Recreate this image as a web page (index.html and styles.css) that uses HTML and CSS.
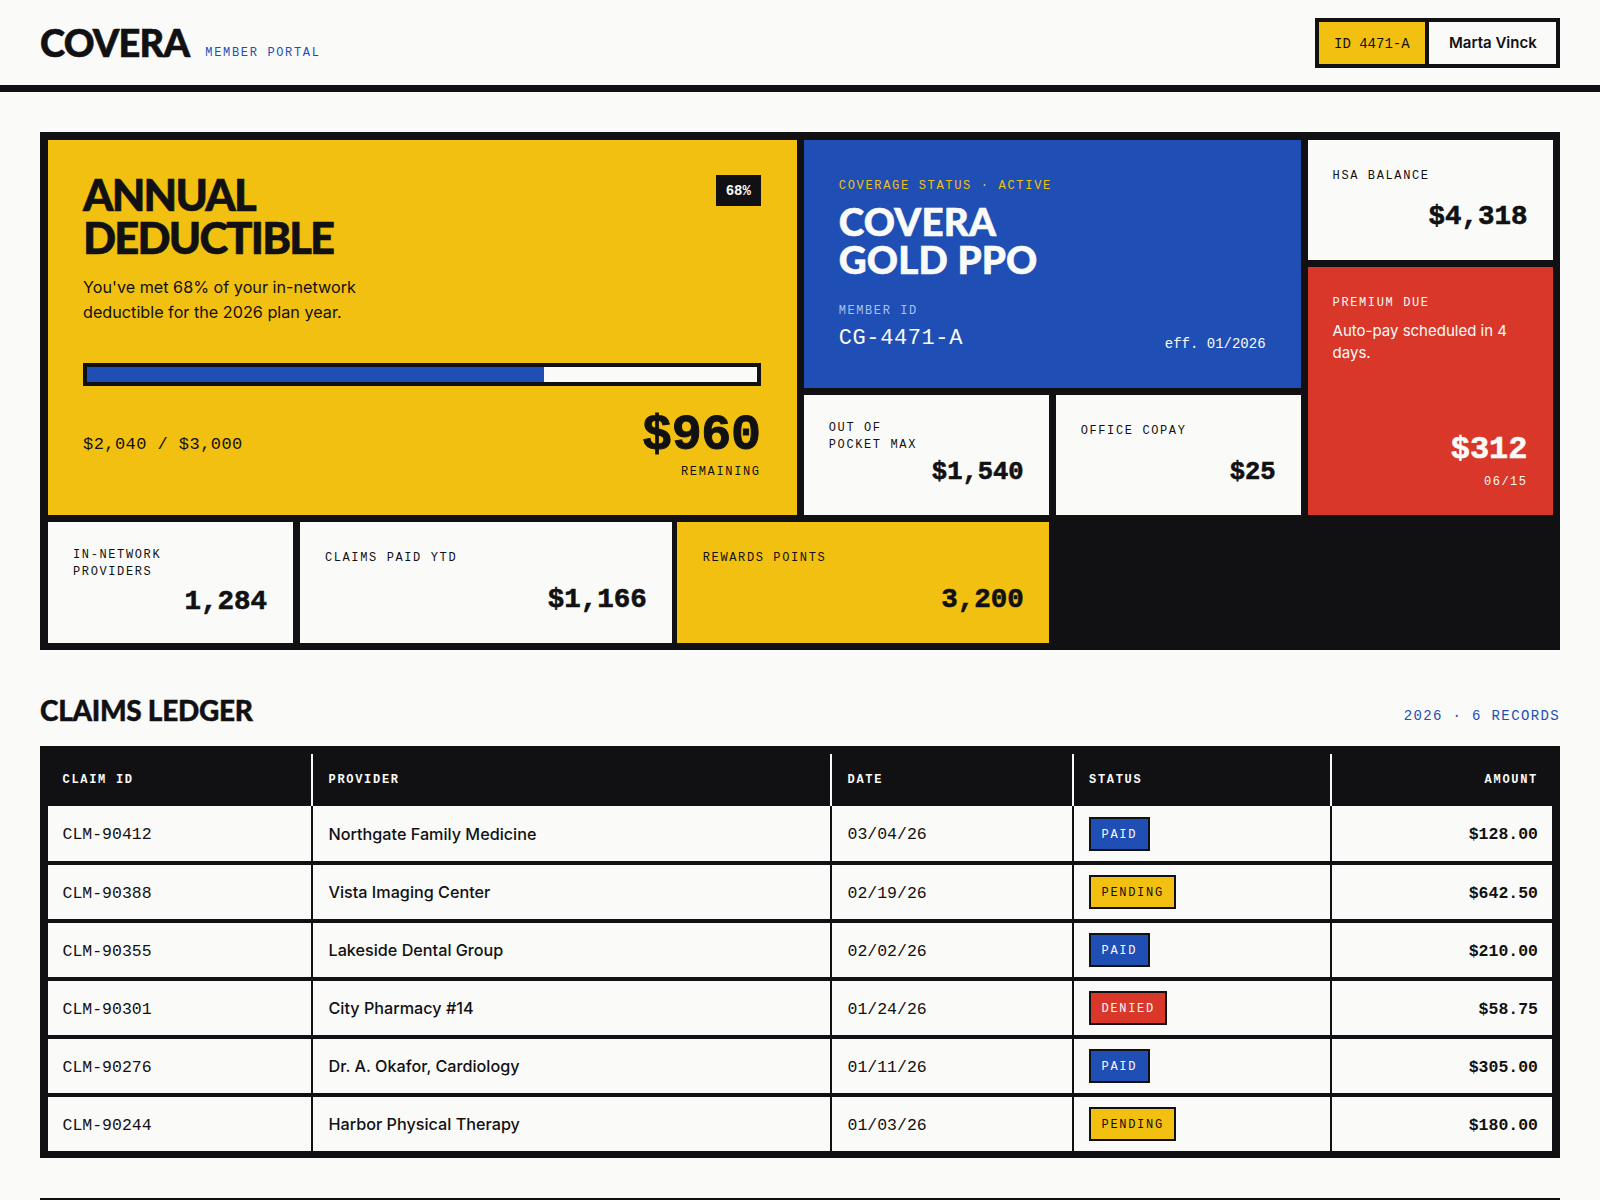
FILE: index.html
```html
<!DOCTYPE html>
<html lang="en">
<head>
  <meta charset="UTF-8" />
  <meta name="viewport" content="width=device-width, initial-scale=1" />
  <title>Covera Member Portal</title>
  <link rel="stylesheet" href="styles.css">
</head>
<body>
  <header class="topbar">
    <div class="brand">
      <span class="logo">COVERA</span>
      <span class="portal">MEMBER PORTAL</span>
    </div>
    <div class="member-chip">
      <span class="chip-id">ID 4471-A</span>
      <span class="chip-name">Marta Vinck</span>
    </div>
  </header>
  <main>
    <section class="board">
      <div class="hero">
        <div class="hero-top">
          <h1>ANNUAL<br>DEDUCTIBLE</h1>
          <span class="pct">68%</span>
        </div>
        <p class="hero-copy">You've met 68% of your in-network<br>deductible for the 2026 plan year.</p>
        <div class="meter"><div class="meter-fill"></div></div>
        <div class="hero-bottom">
          <span class="spent">$2,040 / $3,000</span>
          <div class="remaining">
            <div class="big-num">$960</div>
            <div class="remaining-label">REMAINING</div>
          </div>
        </div>
      </div>

      <div class="plan">
        <div class="plan-status">COVERAGE STATUS · ACTIVE</div>
        <h2>COVERA<br>GOLD PPO</h2>
        <div class="plan-bottom">
          <div>
            <div class="plan-label">MEMBER ID</div>
            <div class="plan-id">CG-4471-A</div>
          </div>
          <span class="plan-eff">eff. 01/2026</span>
        </div>
      </div>

      <div class="tile tile-hsa">
        <div class="tile-label">HSA BALANCE</div>
        <div class="tile-value val-lg">$4,318</div>
      </div>

      <div class="tile tile-premium">
        <div class="tile-label">PREMIUM DUE</div>
        <p class="premium-copy">Auto-pay scheduled in 4 days.</p>
        <div class="tile-value val-xl">$312</div>
        <div class="premium-date">06/15</div>
      </div>

      <div class="tile tile-oop two-line">
        <div class="tile-label">OUT OF<br>POCKET MAX</div>
        <div class="tile-value">$1,540</div>
      </div>
      <div class="tile tile-copay">
        <div class="tile-label">OFFICE COPAY</div>
        <div class="tile-value">$25</div>
      </div>
      <div class="tile tile-network two-line">
        <div class="tile-label">IN-NETWORK<br>PROVIDERS</div>
        <div class="tile-value val-lg">1,284</div>
      </div>
      <div class="tile tile-claims">
        <div class="tile-label">CLAIMS PAID YTD</div>
        <div class="tile-value val-lg">$1,166</div>
      </div>
      <div class="tile tile-rewards">
        <div class="tile-label">REWARDS POINTS</div>
        <div class="tile-value val-lg">3,200</div>
      </div>
    </section>

    <section class="ledger">
      <div class="ledger-head">
        <h2>CLAIMS LEDGER</h2>
        <span class="ledger-count">2026 · 6 RECORDS</span>
      </div>
      <table class="claims">
        <colgroup>
          <col class="c-id"><col class="c-provider"><col class="c-date"><col class="c-status"><col class="c-amount">
        </colgroup>
        <thead>
          <tr>
            <th>CLAIM ID</th>
            <th>PROVIDER</th>
            <th>DATE</th>
            <th class="status">STATUS</th>
            <th class="amount">AMOUNT</th>
          </tr>
        </thead>
        <tbody>
          <tr>
            <td class="mono">CLM-90412</td>
            <td>Northgate Family Medicine</td>
            <td class="mono">03/04/26</td>
            <td class="status"><span class="tag tag-paid">PAID</span></td>
            <td class="amount">$128.00</td>
          </tr>
          <tr>
            <td class="mono">CLM-90388</td>
            <td>Vista Imaging Center</td>
            <td class="mono">02/19/26</td>
            <td class="status"><span class="tag tag-pending">PENDING</span></td>
            <td class="amount">$642.50</td>
          </tr>
          <tr>
            <td class="mono">CLM-90355</td>
            <td>Lakeside Dental Group</td>
            <td class="mono">02/02/26</td>
            <td class="status"><span class="tag tag-paid">PAID</span></td>
            <td class="amount">$210.00</td>
          </tr>
          <tr>
            <td class="mono">CLM-90301</td>
            <td>City Pharmacy #14</td>
            <td class="mono">01/24/26</td>
            <td class="status"><span class="tag tag-denied">DENIED</span></td>
            <td class="amount">$58.75</td>
          </tr>
          <tr>
            <td class="mono">CLM-90276</td>
            <td>Dr. A. Okafor, Cardiology</td>
            <td class="mono">01/11/26</td>
            <td class="status"><span class="tag tag-paid">PAID</span></td>
            <td class="amount">$305.00</td>
          </tr>
          <tr>
            <td class="mono">CLM-90244</td>
            <td>Harbor Physical Therapy</td>
            <td class="mono">01/03/26</td>
            <td class="status"><span class="tag tag-pending">PENDING</span></td>
            <td class="amount">$180.00</td>
          </tr>
        </tbody>
      </table>
    </section>
  </main>
  <footer class="page-foot"></footer>
</body>
</html>
```
FILE: styles.css
```css
:root {
  --ink: #111113;
  --paper: #fafaf8;
  --yellow: #f2c010;
  --blue: #1f4fb5;
  --red: #d8372a;
  --mono: "Liberation Mono", monospace;
  --head: Lato, sans-serif;
}
* {
  box-sizing: border-box;
}
body {
  margin: 0;
  background: var(--paper);
  color: var(--ink);
  font-family: Inter, sans-serif;
}
h1, h2, p {
  margin: 0;
}

/* top bar */
.topbar {
  height: 92px;
  border-bottom: 7px solid var(--ink);
  padding: 0 40px;
  display: flex;
  justify-content: space-between;
  align-items: center;
}
.brand {
  display: flex;
  align-items: flex-end;
  gap: 16px;
  margin-bottom: 2px;
}
.logo {
  font-family: var(--head);
  font-weight: 900;
  font-size: 38px;
  letter-spacing: -0.8px;
  line-height: 1;
  -webkit-text-stroke: 0.6px var(--ink);
}
.portal {
  font-family: var(--mono);
  font-size: 12px;
  line-height: 14px;
  margin-bottom: 1px;
  letter-spacing: 1.66px;
  color: var(--blue);
}
.member-chip {
  display: flex;
  height: 50px;
  width: 245px;
  border: 4px solid var(--ink);
  background: var(--paper);
}
.chip-id {
  width: 110px;
  border-right: 4px solid var(--ink);
  background: var(--yellow);
  font-family: var(--mono);
  font-size: 14px;
  padding: 2px 0 0 15px;
  display: flex;
  align-items: center;
}
.chip-name {
  padding-left: 20px;
  font-size: 15px;
  font-weight: 600;
  display: flex;
  align-items: center;
}

/* board */
main {
  padding: 40px 40px 0;
}
.board {
  background: var(--ink);
  padding: 8px 7.5px 7px 8px;
  display: grid;
  grid-template-columns: repeat(12, 1fr);
  grid-template-rows: 120px 121px 120px 121px;
  gap: 7px;
}
.hero {
  grid-column: 1 / span 6;
  grid-row: 1 / span 3;
  background: var(--yellow);
  padding: 33px 36px 0 35px;
  display: flex;
  flex-direction: column;
}
.hero-top {
  display: flex;
  justify-content: space-between;
  align-items: flex-start;
}
.hero h1 {
  font-family: var(--head);
  font-weight: 900;
  font-size: 43.5px;
  line-height: 43px;
  letter-spacing: -1.8px;
  -webkit-text-stroke: 0.6px var(--ink);
}
.pct {
  margin-top: 2px;
  background: var(--ink);
  color: var(--paper);
  font-family: var(--mono);
  font-weight: 700;
  font-size: 14px;
  width: 45px;
  height: 31px;
  display: flex;
  align-items: center;
  justify-content: center;
}
.hero-copy {
  margin-top: 16px;
  font-size: 16.2px;
  line-height: 25px;
}
.meter {
  margin-top: 38px;
  height: 23px;
  border: 4px solid var(--ink);
  background: var(--paper);
}
.meter-fill {
  width: 68.2%;
  height: 100%;
  background: var(--blue);
}
.hero-bottom {
  margin-top: 24px;
  display: flex;
  justify-content: space-between;
  align-items: center;
}
.spent {
  font-family: var(--mono);
  font-size: 17px;
  letter-spacing: 0.45px;
  margin-top: -2px;
}
.remaining {
  text-align: right;
}
.big-num {
  font-family: var(--mono);
  font-weight: 700;
  font-size: 50px;
  line-height: 52px;
  letter-spacing: -0.3px;
  -webkit-text-stroke: 1px var(--ink);
}
.remaining-label {
  margin-top: 2px;
  font-family: var(--mono);
  font-size: 12px;
  letter-spacing: 1.66px;
  line-height: 17px;
}

.plan {
  grid-column: 7 / span 4;
  grid-row: 1 / span 2;
  background: var(--blue);
  color: var(--paper);
  padding: 38px 35px 0;
  display: flex;
  flex-direction: column;
}
.plan-status {
  font-family: var(--mono);
  font-size: 12px;
  letter-spacing: 1.68px;
  line-height: 17px;
  color: var(--yellow);
}
.plan h2 {
  margin-top: 7px;
  font-family: var(--head);
  font-weight: 900;
  font-size: 38.5px;
  line-height: 38px;
  letter-spacing: 0.2px;
  -webkit-text-stroke: 0.6px var(--paper);
}
.plan-bottom {
  margin-top: 25px;
  display: flex;
  justify-content: space-between;
  align-items: flex-end;
}
.plan-label {
  font-family: var(--mono);
  font-size: 12px;
  letter-spacing: 1.58px;
  line-height: 17px;
  color: #a9c1f2;
}
.plan-id {
  margin-top: 4px;
  font-family: var(--mono);
  font-size: 22px;
  letter-spacing: 0.6px;
  line-height: 30px;
}
.plan-eff {
  font-family: var(--mono);
  font-size: 14px;
  line-height: 18px;
  margin-bottom: 1px;
}

.tile {
  background: var(--paper);
  padding: 28px 25px 26px;
  display: flex;
  flex-direction: column;
  justify-content: space-between;
}
.two-line {
  padding-top: 25px;
}
.tile-label {
  font-family: var(--mono);
  font-size: 12px;
  letter-spacing: 1.62px;
  line-height: 17px;
}
.tile-value {
  font-family: var(--mono);
  font-weight: 700;
  font-size: 25.5px;
  line-height: 34px;
  text-align: right;
  -webkit-text-stroke: 0.6px currentColor;
}
.val-lg {
  font-size: 27.5px;
}
.val-xl {
  font-size: 32px;
}
.tile-hsa {
  grid-column: 11 / span 2;
  grid-row: 1;
}
.tile-premium {
  grid-column: 11 / span 2;
  grid-row: 2 / span 2;
  background: var(--red);
  color: var(--paper);
  justify-content: flex-start;
}
.premium-copy {
  margin-top: 8px;
  font-size: 15px;
  line-height: 22px;
}
.tile-premium .tile-value {
  margin-top: auto;
}
.premium-date {
  margin-top: 7px;
  margin-bottom: -2px;
  text-align: right;
  font-family: var(--mono);
  font-size: 12px;
  letter-spacing: 1.5px;
  line-height: 17px;
}
.tile-oop {
  grid-column: 7 / span 2;
  grid-row: 3;
  padding-bottom: 25px;
}
.tile-copay {
  grid-column: 9 / span 2;
  grid-row: 3;
  padding-bottom: 25px;
}
.tile-network {
  grid-column: 1 / span 2;
  grid-row: 4;
  padding-right: 26px;
  padding-bottom: 24px;
}
.tile-claims {
  grid-column: 3 / span 3;
  grid-row: 4;
  margin-right: -1px;
}
.tile-rewards {
  grid-column: 6 / span 3;
  grid-row: 4;
  margin-left: -1px;
  padding-left: 26px;
  background: var(--yellow);
}

/* ledger */
.ledger-head {
  margin-top: 44px;
  height: 52px;
  display: flex;
  justify-content: space-between;
  align-items: flex-start;
}
.ledger-head h2 {
  font-family: var(--head);
  font-weight: 900;
  font-size: 28px;
  line-height: 32px;
  letter-spacing: -0.3px;
  -webkit-text-stroke: 0.4px var(--ink);
}
.ledger-count {
  margin-top: 13px;
  font-family: var(--mono);
  font-size: 14px;
  line-height: 18px;
  letter-spacing: 1.37px;
  color: var(--blue);
}
.claims {
  width: 100%;
  table-layout: fixed;
  border-collapse: separate;
  border-spacing: 0;
  border: 8px solid var(--ink);
  border-bottom-width: 7px;
  background: var(--paper);
}
.c-id { width: 265px; }
.c-provider { width: 519px; }
.c-date { width: 242px; }
.c-status { width: 258px; }
.claims th {
  height: 52px;
  padding: 0 14px 0 15.5px;
  background: var(--ink);
  color: var(--paper);
  font-family: var(--mono);
  font-weight: 700;
  font-size: 12px;
  letter-spacing: 1.7px;
  text-align: left;
  border-right: 2px solid var(--paper);
}
.claims th:first-child,
.claims td:first-child {
  padding-left: 14.5px;
}
.claims td {
  height: 58px;
  padding: 0 14px 0 15.5px;
  font-size: 16.2px;
  font-weight: 500;
  border-right: 2px solid var(--ink);
  border-bottom: 4px solid var(--ink);
}
.claims tbody tr:first-child td {
  height: 59px;
}
.claims tbody tr:last-child td {
  height: 54px;
  border-bottom: none;
}
.claims th:last-child,
.claims td:last-child {
  border-right: none;
}
.claims .status {
  padding-left: 15px;
}
.claims .mono {
  font-family: var(--mono);
  font-weight: 400;
  font-size: 16.5px;
  padding-top: 2px;
}
.claims .amount {
  text-align: right;
  padding-right: 14px;
}
.claims td.amount {
  font-family: var(--mono);
  font-weight: 700;
  font-size: 16.5px;
  padding-top: 2px;
}
.tag {
  display: inline-block;
  vertical-align: middle;
  border: 2px solid var(--ink);
  padding: 6px 10.5px 4px;
  font-family: var(--mono);
  font-size: 12px;
  line-height: 20px;
  letter-spacing: 1.7px;
}
.tag-paid {
  background: var(--blue);
  color: var(--paper);
}
.tag-pending {
  background: var(--yellow);
}
.tag-denied {
  background: var(--red);
  color: var(--paper);
}

.page-foot {
  margin: 40px 40px 0;
  height: 40px;
  border-top: 4px solid var(--ink);
}
```
